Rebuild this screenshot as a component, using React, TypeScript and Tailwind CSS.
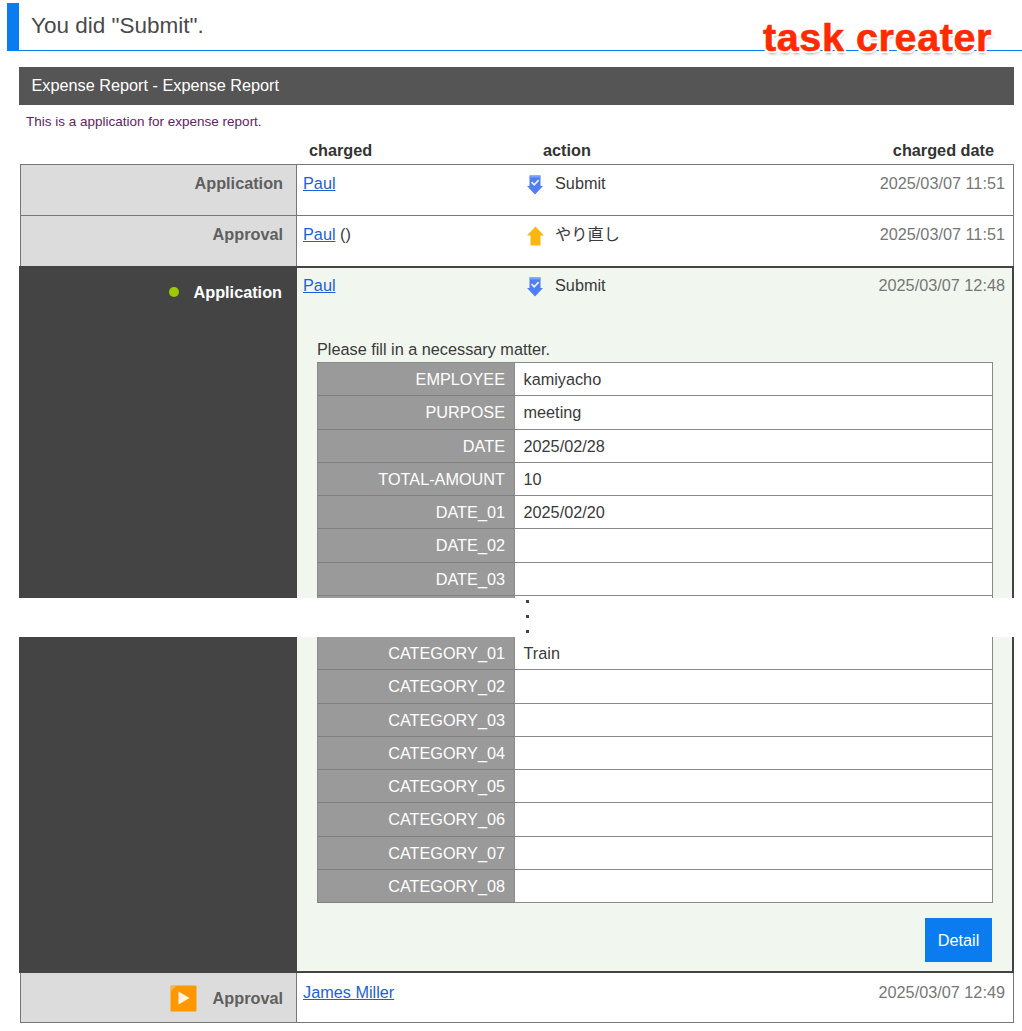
import type { ReactNode } from "react";

const F = "font-['Liberation_Sans',Arial,'Noto_Sans_CJK_JP',sans-serif]";

function DownIcon() {
  return (
    <svg width="16" height="20" viewBox="0 0 16 20" className="block">
      <path d="M2.5 0.5H13.5V11H16L8 19.5L0 11H2.5Z" fill="#4f7df5" />
      <path d="M2.5 0.5H13.5V2.5H2.5Z" fill="#7d9ff8" />
      <path d="M4.6 7.2L7.2 9.8L11.6 5.2" fill="none" stroke="#ffffff" strokeWidth="1.7" opacity="0.9" />
    </svg>
  );
}

function UpIcon() {
  return (
    <svg width="17" height="20" viewBox="0 0 17 20" className="block">
      <path d="M8.5 0.5L17 9.5H13.5V19.5H3.5V9.5H0Z" fill="#fbb70f" />
    </svg>
  );
}

function PlayIcon() {
  return (
    <svg width="27" height="27" viewBox="0 0 27 27" className="block">
      <rect x="0.5" y="0.5" width="26" height="26" rx="1" fill="#ff9800" />
      <path d="M1 6V1H6Z" fill="#ffb54d" />
      <path d="M8.5 6.5L19.5 13L8.5 19.5Z" fill="#fff3df" />
    </svg>
  );
}

const topRows = [
  ["EMPLOYEE", "kamiyacho"],
  ["PURPOSE", "meeting"],
  ["DATE", "2025/02/28"],
  ["TOTAL-AMOUNT", "10"],
  ["DATE_01", "2025/02/20"],
  ["DATE_02", ""],
  ["DATE_03", ""],
];
const bottomRows = [
  ["CATEGORY_01", "Train"],
  ["CATEGORY_02", ""],
  ["CATEGORY_03", ""],
  ["CATEGORY_04", ""],
  ["CATEGORY_05", ""],
  ["CATEGORY_06", ""],
  ["CATEGORY_07", ""],
  ["CATEGORY_08", ""],
];

function FormRow({ label, value, tall }: { label: string; value: string; tall?: boolean }) {
  return (
    <div className={tall ? "flex h-[41.25px]" : "flex h-[33.25px]"}>
      <div className="w-[196px] shrink-0 bg-[#9a9a9a] border-b border-[#808080] text-white text-right pr-[9px] text-[16.25px] leading-[32px]">
        {label}
      </div>
      <div className="flex-1 border-l border-b border-[#8a8a8a] bg-white pl-[8.5px] text-[#3a3a3a] text-[16.25px] leading-[32px]">
        {value}
      </div>
    </div>
  );
}

function SimpleRow({
  title,
  icon,
  name,
  suffix,
  action,
  date,
  actionIcon,
}: {
  title: string;
  icon?: ReactNode;
  name: string;
  suffix?: string;
  action?: string;
  date: string;
  actionIcon?: ReactNode;
}) {
  const late = !!icon;
  return (
    <div className={late ? "flex h-[50px] border-b border-[#777]" : "flex h-[51px] border-b border-[#777]"}>
      <div
        className={
          late
            ? "w-[276px] shrink-0 bg-[#dcdcdc] border-r border-[#777] flex justify-end gap-[16px] pr-[13px] pt-[13px] text-[#5f5f5f] font-bold text-[16.25px] leading-[24px]"
            : "w-[276px] shrink-0 bg-[#dcdcdc] border-r border-[#777] flex justify-end gap-[16px] pr-[13px] pt-[6px] text-[#5f5f5f] font-bold text-[16.25px] leading-[24px]"
        }
      >
        {icon ? <div className="-mt-[1px]">{icon}</div> : null}
        <span>{title}</span>
      </div>
      <div
        className={
          late
            ? "flex-1 flex pl-[6px] pt-[7px] text-[16.25px] leading-[24px]"
            : "flex-1 flex pl-[6px] pt-[6px] text-[16.25px] leading-[24px]"
        }
      >
        <div className="w-[223px] text-[#3a3a3a]">
          <a className="text-[#1d5fd6] underline">{name}</a>
          {suffix}
        </div>
        <div className="flex-1 flex text-[#3a3a3a]">
          {actionIcon ? <div className="w-[29px] pt-[4px] pl-[1px]">{actionIcon}</div> : null}
          <span>{action}</span>
        </div>
        <div className="pr-[8px] text-[#777]">{date}</div>
      </div>
    </div>
  );
}

export default function App() {
  return (
    <div className={`${F} relative w-[1022px] h-[1031px] overflow-hidden bg-white`}>
      <div className="pt-[3px] pl-[7px]">
        <div className="h-[48px] border-b-[1.5px] border-[#0a7cf0] flex">
          <div className="w-[12px] bg-[#0a7cf0]" />
          <div className="pl-[12px] text-[22.5px] leading-[46px] text-[#4a4a4a]">You did "Submit".</div>
        </div>
      </div>

      <div className="ml-[19px] mr-[8px] mt-[16px]">
        <div className="h-[38px] bg-[#555] text-white text-[16.25px] leading-[37px] pl-[12.5px]">
          Expense Report - Expense Report
        </div>
        <div className="pl-[7px] pt-[9px] h-[33px] text-[13.5px] leading-[15px] text-[#5f2460]">
          This is a application for expense report.
        </div>
        <div className="flex h-[26px] text-[16.25px] font-bold text-[#333] leading-[25px]">
          <div className="w-[290px] shrink-0" />
          <div className="w-[234px]">charged</div>
          <div className="flex-1">action</div>
          <div className="pr-[20px]">charged date</div>
        </div>
        <div className="border-t border-r border-[#777] ml-px">
          <div className="border-l border-[#777]">
            <SimpleRow title="Application" name="Paul" action="Submit" actionIcon={<DownIcon />} date="2025/03/07 11:51" />
            <SimpleRow title="Approval" name="Paul" suffix=" ()" action="やり直し" actionIcon={<UpIcon />} date="2025/03/07 11:51" />
          </div>
        </div>

        <div className="flex h-[707px] -mt-px">
          <div className="w-[278px] shrink-0 bg-[#444] flex justify-end items-start gap-[15px] pr-[15px] pt-[14px] text-white font-bold text-[16.25px] leading-[24px]">
            <span className="mt-[7px] w-[10px] h-[10px] rounded-full bg-[#9ccc00]" />
            <span>Application</span>
          </div>
          <div className="flex-1 bg-[#f1f6ee] border-2 border-l-0 border-[#444] flex flex-col">
            <div className="flex h-[64px] pl-[6px] pt-[5px] text-[16.25px] leading-[24px] pr-[7px]">
              <div className="w-[223px]"><a className="text-[#1d5fd6] underline">Paul</a></div>
              <div className="flex-1 flex text-[#3a3a3a]">
                <div className="w-[29px] pt-[4px] pl-[1px]"><DownIcon /></div>
                <span>Submit</span>
              </div>
              <div className="text-[#777]">2025/03/07 12:48</div>
            </div>
            <div className="pl-[20px] pr-[19px] pt-[4px]">
              <div className="text-[16.25px] leading-[26px] text-[#3a3a3a]">Please fill in a necessary matter.</div>
              <div className="border border-b-0 border-[#8a8a8a]">
                {topRows.map((r) => <FormRow key={r[0]} label={r[0]} value={r[1]} />)}
                <FormRow label="" value="" tall />
                {bottomRows.map((r) => <FormRow key={r[0]} label={r[0]} value={r[1]} />)}
              </div>
              <div className="flex justify-end pt-[15px] pr-px">
                <div className="w-[67px] h-[44px] bg-[#0a7cf0] text-white text-[16.25px] leading-[44px] text-center">Detail</div>
              </div>
            </div>
          </div>
        </div>

        <div className="border-r border-[#777] ml-px">
          <div className="border-l border-[#777]">
            <SimpleRow title="Approval" icon={<PlayIcon />} name="James Miller" date="2025/03/07 12:49" />
          </div>
        </div>
      </div>

      <div className="absolute left-[19px] right-0 top-[598px] h-[39px] bg-white">
        <div className="absolute left-[507px] top-0 flex flex-col gap-[12px] pt-[2px]">
          <span className="w-[3px] h-[3px] bg-[#444]" />
          <span className="w-[3px] h-[3px] bg-[#444]" />
          <span className="w-[3px] h-[3px] bg-[#444]" />
        </div>
      </div>

      <div className="absolute left-[763px] top-[14px] text-[39.5px] tracking-[0.6px] leading-[46px] font-bold text-[#ff2a00] [-webkit-text-stroke:0.6px_#ff2a00] [text-shadow:2px_0_0_#fff,-2px_0_0_#fff,0_2px_0_#fff,0_-2px_0_#fff,2px_2px_0_#fff,-2px_2px_0_#fff,2px_-2px_0_#fff,-2px_-2px_0_#fff,1px_3px_3px_rgba(0,0,0,0.35)]">
        task creater
      </div>
    </div>
  );
}
